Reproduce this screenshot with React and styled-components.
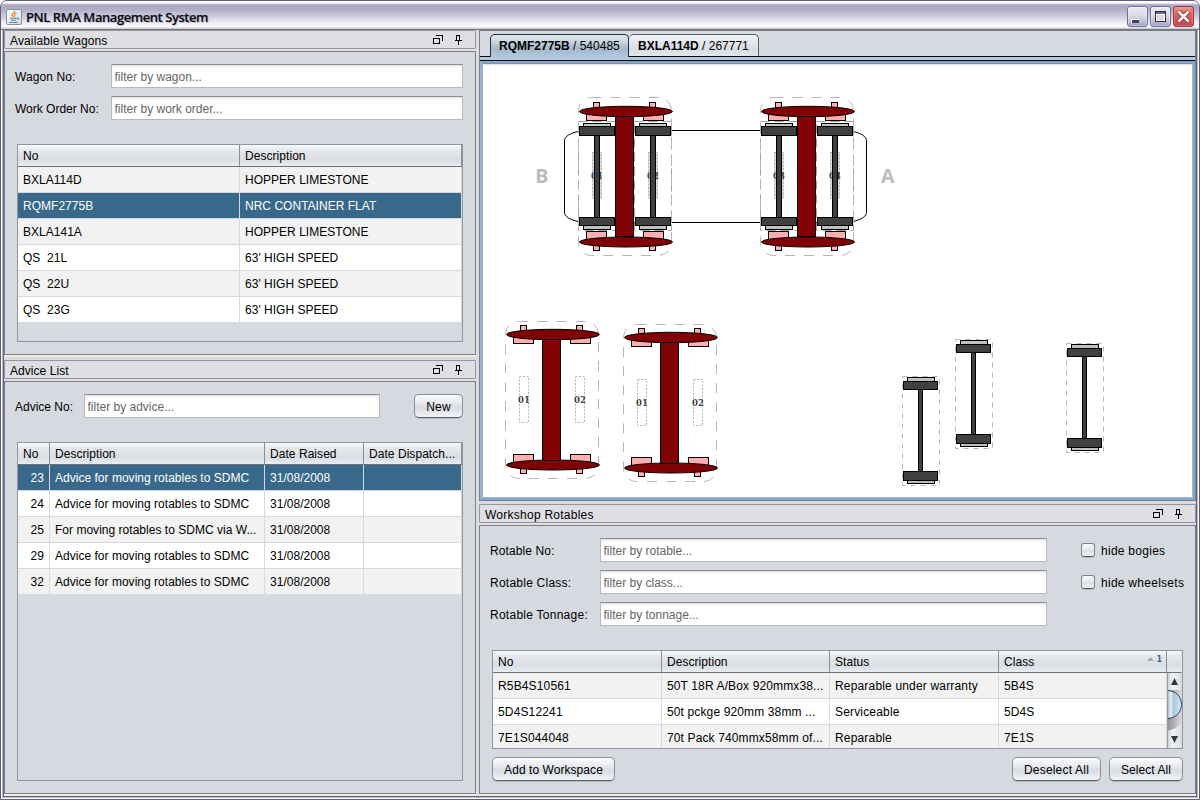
import React from "react";
import styled, { createGlobalStyle } from "styled-components";

const GlobalStyle = createGlobalStyle`
  * { box-sizing: border-box; }
  html, body { margin: 0; padding: 0; background: #fff; }
  body { width: 1200px; height: 800px; overflow: hidden; }
  body, button, input {
    font-family: "Liberation Sans", Arial, sans-serif;
    font-size: 12px;
    color: #000;
  }
`;

/* ---------- window frame ---------- */

const Window = styled.div`
  width: 1200px;
  height: 800px;
  display: flex;
  flex-direction: column;
  border: 1px solid #615d79;
  border-radius: 7px 7px 0 0;
  overflow: hidden;
  background: linear-gradient(#66627e, #66627e) 2px 0 / 1194px 796px no-repeat, #ffffff;
  box-shadow: inset 0 0 0 1px #ffffff, inset 0 0 0 2px #b9b7ce;
`;

const TitleBar = styled.header`
  flex: none;
  height: 29px;
  display: flex;
  align-items: center;
  padding: 2px 5px 0 5px;
  background: linear-gradient(
    #fdfdfe 0,
    #fdfdfe 2px,
    #c9c8d9 3px,
    #a9a8c4 4px,
    #b1b0c9 9px,
    #d0cfde 16px,
    #f4f4f8 23px,
    #ffffff 26px,
    #cfced8 27px,
    #cfced8 28px,
    #757580 28px
  );
`;

const Title = styled.h1`
  margin: 0 auto 0 4px;
  font-family: "Open Sans", "Noto Sans", sans-serif;
  font-size: 13px;
  font-weight: 600;
  line-height: 20px;
  letter-spacing: -0.44px;
  color: #0c0c10;
  -webkit-text-stroke: 0.2px #0c0c10;
  text-shadow: 1px 1px 0 #c4c3d4;
`;

const WindowButton = styled.button`
  width: 21px;
  height: 21px;
  margin-left: 2px;
  padding: 0;
  display: flex;
  align-items: center;
  justify-content: center;
  border: 1px solid ${(p) => (p.$close ? "#a33440" : "#6d7092")};
  border-radius: 3px;
  background: ${(p) =>
    p.$close
      ? "linear-gradient(#e8a294 0, #dc6d6a 5px, #d65a5a 11px, #bd434e 19px)"
      : "linear-gradient(#e9e9f2 0, #dcdce9 8px, #c3c3d8 14px, #9c9cc0 19px)"};
  box-shadow: inset 0 0 0 1px ${(p) => (p.$close ? "rgba(240,150,140,.45)" : "rgba(255,255,255,.35)")};
`;

const Content = styled.main`
  flex: none;
  height: 766px;
  margin: 0 3px;
  display: flex;
  gap: 3px;
  background: #dddce2;
`;

const Column = styled.section`
  width: ${(p) => p.$width}px;
  display: flex;
  flex-direction: column;
  background: #e0dfe4;
`;

/* ---------- docked panels ---------- */

const PanelHeader = styled.div`
  flex: none;
  height: 19px;
  margin-bottom: 2px;
  padding: 1px 12px 0 5px;
  display: flex;
  align-items: center;
  border: 1px solid #96959a;
  border-radius: 1px;
  background: #dfdee3;
  line-height: 16px;
`;

const PanelTitle = styled.span`
  margin-right: auto;
  padding-top: 2px;
  letter-spacing: ${(p) => p.$track || 0}px;
`;

const PanelBody = styled.div`
  flex: none;
  height: ${(p) => p.$height}px;
  padding: 12px 0 0 10px;
  border: 1px solid #7f7f86;
  background: #d6d9df;
`;

const CreamEdge = styled.div`
  flex: none;
  height: 2px;
  background: #f0ede0;
`;

const SplitGap = styled.div`
  flex: none;
  height: 3px;
  background: #d9dae0;
`;

/* ---------- form parts ---------- */

const FormRows = styled.div`
  display: flex;
  flex-direction: column;
  gap: 8px;
`;

const FormRow = styled.label`
  display: flex;
  align-items: center;
  height: 24px;
`;

const FieldLabel = styled.span`
  width: ${(p) => p.$width}px;
  padding-top: 1px;
  line-height: 14px;
  letter-spacing: ${(p) => p.$track || 0}px;
`;

const TextField = styled.input`
  width: ${(p) => p.$width}px;
  height: 24px;
  margin: 0;
  padding: 1px 3px 0 2.5px;
  border: 1px solid #b9b9bc;
  border-top-color: #8d8e90;
  border-radius: 0;
  outline: none;
  background: linear-gradient(#d4d4d6 0, #f1f1f2 1px, #fff 3px);
  &::placeholder {
    color: #666;
    opacity: 1;
  }
`;

const Button = styled.button`
  width: ${(p) => p.$width}px;
  height: 24px;
  padding: 1px 0 0;
  letter-spacing: ${(p) => p.$track || 0}px;
  border: 1px solid #8c9099;
  border-bottom-color: #5b6069;
  border-radius: 5px;
  background: linear-gradient(#fafbfc 0, #e9ebee 35%, #d9dce2 55%, #dfe2e8 70%, #f3f5fa 100%);
  box-shadow: 0 1px 0 #b7bac1;
  white-space: nowrap;
`;

const CheckRow = styled.label`
  display: flex;
  align-items: center;
  height: 24px;
  gap: 6px;
  white-space: nowrap;
  letter-spacing: 0.27px;
`;

const CheckText = styled.span`
  padding-top: 2px;
`;

const CheckBox = styled.span`
  width: 14px;
  height: 14px;
  border: 1px solid #7f838c;
  border-bottom-color: #5d626b;
  border-radius: 3px;
  background: linear-gradient(#f8f9fb, #e4e7ec 50%, #dcdfe5 60%, #f0f2f7);
  box-shadow: 0 1px 0 #b7bac1;
`;

const AdviceBar = styled.div`
  display: flex;
  align-items: center;
  justify-content: space-between;
  width: 448px;
`;

const RotableForm = styled.div`
  display: flex;
  gap: 34px;
`;

const ButtonBar = styled.div`
  display: flex;
  gap: 8px;
  width: 691px;
  margin: 8px 0 0 2px;
`;

const Spacer = styled.div`
  flex: 1;
`;

/* ---------- tables ---------- */

const TableFrame = styled.div`
  width: ${(p) => p.$width}px;
  height: ${(p) => p.$height}px;
  margin: 24px 0 0 2px;
  border: 1px solid #92959e;
  overflow: hidden;
`;

const TableLine = styled.div`
  display: grid;
  grid-template-columns: ${(p) => p.$cols};
`;

const HeadCell = styled.div`
  height: 22px;
  padding-left: 5px;
  display: flex;
  align-items: center;
  overflow: hidden;
  white-space: nowrap;
  letter-spacing: 0.05px;
  border-right: 1px solid #8b8e96;
  border-bottom: 1px solid #6d717a;
  background: linear-gradient(#f8f9fb 0, #e6e9ec 5px, #dde0e4 12px, #dadde3 15px, #e9ecf4 21px);
  ${(p) => p.$plain && "border-right-color: #e2e4e8;"}
`;

const SortMark = styled.span`
  margin: 0 4px 5px auto;
  display: flex;
  align-items: center;
  gap: 2px;
  font: bold 8px/11px "DejaVu Sans", sans-serif;
  color: #39698a;
`;

const Cell = styled.div`
  height: 26px;
  padding: 1px 5px 0;
  line-height: 25px;
  overflow: hidden;
  white-space: nowrap;
  letter-spacing: ${(p) => p.$track || 0.02}px;
  text-align: ${(p) => (p.$right ? "right" : "left")};
  border-right: 1px solid #d6d9df;
  border-bottom: 1px solid #d6d9df;
  background: ${(p) => (p.$selected ? "#39698a" : p.$odd ? "#f2f2f2" : "#fff")};
  color: ${(p) => (p.$selected ? "#fff" : "#000")};
`;

const RotablesBody = styled.div`
  display: flex;
`;

const ScrollBar = styled.div`
  width: 15px;
  height: 75px;
`;

function Table({ width, height, cols, head, rows, selected, rightFirst }) {
  return (
    <TableFrame $width={width} $height={height}>
      <TableLine $cols={cols}>
        {head.map((h) => (
          <HeadCell key={h}>{h}</HeadCell>
        ))}
      </TableLine>
      {rows.map((row, r) => (
        <TableLine $cols={cols} key={r}>
          {row.map((c, i) => (
            <Cell key={i} $odd={r % 2 === 0} $selected={r === selected} $right={rightFirst && i === 0}>
              {c}
            </Cell>
          ))}
        </TableLine>
      ))}
    </TableFrame>
  );
}

/* ---------- workspace ---------- */

const Workspace = styled.div`
  flex: none;
  height: 471px;
  display: flex;
  flex-direction: column;
  border: 1px solid #7f7f86;
  background: #d6d9df;
`;

const TabStrip = styled.div`
  flex: none;
  height: 26px;
  display: flex;
  align-items: flex-end;
  padding-left: 10px;
  border-bottom: 1px solid #05050f;
`;

const Tab = styled.div`
  width: ${(p) => p.$width}px;
  height: ${(p) => (p.$active ? 23 : 22)}px;
  margin-bottom: ${(p) => (p.$active ? -1 : 0)}px;
  padding: ${(p) => (p.$active ? "0 0 0 8px" : "0 0 0 9px")};
  line-height: 22px;
  white-space: nowrap;
  border: 1px solid ${(p) => (p.$active ? "#1f3040" : "#5c5f68")};
  border-left-width: ${(p) => (p.$active ? 1 : 0)}px;
  border-bottom: 0;
  border-radius: 5px 5px 0 0;
  background: ${(p) =>
    p.$active
      ? "linear-gradient(#e2eaf1 0, #c3d1de 8px, #a9bccd 12px, #a7bbce 16px, #b3c9de 22px)"
      : "linear-gradient(#f2f3f6 0, #e2e4e9 9px, #d9dce2 14px, #e4e7ee 22px)"};
`;

const TabBand = styled.div`
  flex: none;
  height: 4px;
  background: #b5c9de;
  border-bottom: 1px solid #05050f;
`;

const CanvasFrame = styled.div`
  flex: 1;
  border: 2px solid #7ba9d2;
  border-left-color: #8db4d8;
`;

const Canvas = styled.div`
  width: 100%;
  height: 100%;
  border: 1px solid #b0b0b4;
  border-top-color: #8d8e90;
  background: linear-gradient(#dededf 0, #fff 2px);
  svg { display: block; }
`;

const PINK = "#ffafaf";
const STEEL = "#404040";
const MAROON = "#800205";

function Slot({ x, y, label, filled }) {
  return (
    <g>
      <rect x={x} y={y} width="9" height="46" fill={filled ? "#dadada" : "none"} stroke={filled ? "#b2b2b2" : "#b8b8b8"} strokeDasharray="2 1.5" />
      <text x={x + 4.5} y={y + 26.5} textAnchor="middle" fontFamily="DejaVu Serif" fontWeight="bold" fontSize="8.5" fill="#404040">
        {label}
      </text>
    </g>
  );
}

function BogieFrame({ x, y, mounted }) {
  return (
    <g transform={`translate(${x} ${y})`} stroke="#000">
      <rect
        x="0.5"
        y={mounted ? -0.5 : 0.5}
        width="93"
        height={mounted ? 158 : 157}
        rx="13"
        ry="13"
        fill="none"
        stroke="#b6b6b6"
        strokeDasharray="10 9"
      />
      <g fill={PINK}>
        <rect x="15.5" y="4.5" width="6" height="10" />
        <rect x="71.5" y="4.5" width="6" height="10" />
        <rect x="8.5" y="12.5" width="20" height="10" />
        <rect x="65.5" y="12.5" width="20" height="10" />
        <rect x="15.5" y="142.5" width="6" height="10" />
        <rect x="71.5" y="142.5" width="6" height="10" />
        <rect x="8.5" y="133.5" width="20" height="9" />
        <rect x="65.5" y="133.5" width="20" height="9" />
      </g>
      <g fill={MAROON}>
        <ellipse cx="48" cy="13.5" rx="46.5" ry="5.2" />
        <ellipse cx="48" cy="144" rx="46.5" ry="5" />
        <rect x="37.5" y="18.5" width="18" height={mounted ? 120 : 121} />
      </g>
    </g>
  );
}

function Wheelset({ x, y }) {
  return (
    <g transform={`translate(${x} ${y})`} stroke="#000">
      <rect x="0.5" y="0.5" width="37" height="109" fill="none" stroke="#b6b6b6" strokeDasharray="5 5" />
      <rect x="5.5" y="1.5" width="27" height="5" fill="#c0c0c0" />
      <rect x="5.5" y="104.5" width="27" height="3" fill="#c0c0c0" />
      <rect x="16.5" y="13.5" width="4" height="82" fill={STEEL} />
      <rect x="1.5" y="5.5" width="34" height="8" fill={STEEL} />
      <rect x="1.5" y="95.5" width="34" height="9" fill={STEEL} />
    </g>
  );
}

function MountedWheelset({ x }) {
  return (
    <g transform={`translate(${x} 121)`} stroke="#000">
      <rect x="0.5" y="0.5" width="37" height="109" fill="none" stroke="#a2a2a2" strokeDasharray="9 5" />
      <rect x="5.5" y="2.5" width="27" height="5" fill="#c0ccc6" />
      <rect x="5.5" y="104.5" width="27" height="4" fill="#c0c0c0" />
      <rect x="16.5" y="14.5" width="5" height="82" fill={STEEL} />
      <rect x="1.5" y="5.5" width="35" height="9" fill={STEEL} />
      <rect x="1.5" y="96.5" width="35" height="8" fill={STEEL} />
    </g>
  );
}

function WagonDiagram() {
  return (
    <svg width="709" height="433" viewBox="483 64 709 433">
      <rect x="564.5" y="130.5" width="302" height="92" rx="24" ry="10" fill="#fff" stroke="#000" />
      <g fontFamily="Open Sans" fontWeight="bold" fontSize="19.5" fill="#bcbcbc">
        <text x="535.3" y="183">B</text>
        <text x="881" y="183">A</text>
      </g>
      <Slot x={592.5} y={152.5} label="01" filled />
      <Slot x={648.5} y={152.5} label="02" filled />
      <Slot x={774.5} y={152.5} label="03" filled />
      <Slot x={830.5} y={152.5} label="04" filled />
      <MountedWheelset x={578} />
      <MountedWheelset x={634} />
      <MountedWheelset x={760} />
      <MountedWheelset x={816} />
      <BogieFrame x={578} y={98} mounted />
      <BogieFrame x={760} y={98} mounted />

      <BogieFrame x={505} y={321} />
      <Slot x={519.5} y={376.5} label="01" />
      <Slot x={575.5} y={376.5} label="02" />
      <BogieFrame x={623} y={324} />
      <Slot x={637.5} y={379.5} label="01" />
      <Slot x={693.5} y={379.5} label="02" />

      <Wheelset x={902} y={376} />
      <Wheelset x={955} y={339} />
      <Wheelset x={1066} y={343} />
    </svg>
  );
}

/* ---------- icons ---------- */

function JavaIcon() {
  return (
    <svg width="16" height="16" viewBox="0 0 16 16">
      <defs>
        <linearGradient id="cup" x1="0" y1="0" x2="1" y2="1">
          <stop offset="0" stopColor="#fff" />
          <stop offset="1" stopColor="#d4dde4" />
        </linearGradient>
      </defs>
      <rect x="0.5" y="0.5" width="15" height="15" rx="1.5" fill="url(#cup)" stroke="#7e95a6" />
      <path
        d="M8.8 1.600C9.300 3.400 5.600 4 6 6C6.200 6.800 6.800 7 7 7.800M10.500 3.800C9 4.400 8 5.200 8.500 6.200C8.800 6.900 8.900 7.200 8.300 7.900"
        fill="none"
        stroke="#ee8a32"
        strokeWidth="1.300"
      />
      <path d="M4 9.200H11M5 11.200H10.200M3 13.500H11.700M11.300 9C13.600 8.400 13.400 10.600 11.500 11" fill="none" stroke="#5b7f98" />
    </svg>
  );
}

function PanelIcons() {
  return (
    <svg width="30" height="12" viewBox="0 0 30 12" fill="none" stroke="#000" shapeRendering="crispEdges">
      <rect x="0.5" y="4.500" width="6" height="5" />
      <path d="M3 1.500H9.500V7" />
      <path d="M23.500 6.500V1.500H26.500V6.500M21.500 6.500H28.500M25 7V10.500" />
    </svg>
  );
}

function ScrollArt() {
  return (
    <svg width="15" height="75" viewBox="0 0 15 75">
      <defs>
        <linearGradient id="track" x1="0" x2="1" y1="0" y2="0">
          <stop offset="0" stopColor="#c7cacf" />
          <stop offset="0.350" stopColor="#f2f3f5" />
          <stop offset="1" stopColor="#d8dbe0" />
        </linearGradient>
        <linearGradient id="well" x1="0" x2="1" y1="0" y2="0">
          <stop offset="0" stopColor="#8b8d91" />
          <stop offset="1" stopColor="#dadce0" />
        </linearGradient>
        <linearGradient id="thumb" x1="0" x2="1" y1="0" y2="0">
          <stop offset="0" stopColor="#8fa9bf" />
          <stop offset="0.250" stopColor="#e6eef5" />
          <stop offset="0.450" stopColor="#adc6da" />
          <stop offset="1" stopColor="#d7e8f6" />
        </linearGradient>
      </defs>
      <rect width="15" height="75" fill="url(#track)" />
      <path d="M0 17H15V47C13 54 6 57 0 57.500Z" fill="url(#well)" />
      <path d="M0 17.500C9 17.500 14.500 24 14.500 31.500S9 45.500 0 45.500Z" fill="url(#thumb)" />
      <path d="M0 17.500C9 17.500 14.500 24 14.500 31.500S9 45.500 0 45.500" fill="none" stroke="#2c4a63" />
      <path d="M0.500 0V75" stroke="#999ca3" />
      <path d="M4 12L7.500 5L11 12Z" fill="#33363b" />
      <path d="M4 63L7.500 70L11 63Z" fill="#33363b" />
    </svg>
  );
}

const DockHeader = ({ title, track }) => (
  <PanelHeader>
    <PanelTitle $track={track}>{title}</PanelTitle>
    <PanelIcons />
  </PanelHeader>
);

const FilterRow = ({ label, labelWidth, hint, width, track }) => (
  <FormRow>
    <FieldLabel $width={labelWidth} $track={track}>
      {label}
    </FieldLabel>
    <TextField $width={width} placeholder={hint} />
  </FormRow>
);

const wagons = [
  ["BXLA114D", "HOPPER LIMESTONE"],
  ["RQMF2775B", "NRC CONTAINER FLAT"],
  ["BXLA141A", "HOPPER LIMESTONE"],
  ["QS\u00a0 21L", "63' HIGH SPEED"],
  ["QS\u00a0 22U", "63' HIGH SPEED"],
  ["QS\u00a0 23G", "63' HIGH SPEED"],
];

const advices = [
  ["23", "Advice for moving rotables to SDMC", "31/08/2008", ""],
  ["24", "Advice for moving rotables to SDMC", "31/08/2008", ""],
  ["25", "For moving rotables to SDMC via W...", "31/08/2008", ""],
  ["29", "Advice for moving rotables to SDMC", "31/08/2008", ""],
  ["32", "Advice for moving rotables to SDMC", "31/08/2008", ""],
];

const rotables = [
  ["R5B4S10561", "50T 18R A/Box 920mmx38...", "Reparable under warranty", "5B4S"],
  ["5D4S12241", "50t pckge 920mm 38mm ...", "Serviceable", "5D4S"],
  ["7E1S044048", "70t Pack 740mmx58mm of...", "Reparable", "7E1S"],
];

const ROTABLE_COLS = "169px 168px 169px 168px";
const ROTABLE_TRACKS = [0.15, 0.13, 0.17, 0.1];

export default function App() {
  return (
    <>
      <GlobalStyle />
      <Window>
        <TitleBar>
          <JavaIcon />
          <Title>PNL RMA Management System</Title>
          <WindowButton>
            <svg width="19" height="19" shapeRendering="crispEdges">
              <rect x="3" y="12" width="8" height="4" fill="#fff" />
              <rect x="4" y="13" width="7" height="3" fill="#44415f" />
            </svg>
          </WindowButton>
          <WindowButton>
            <svg width="19" height="19" shapeRendering="crispEdges">
              <rect x="4.500" y="4.500" width="10" height="10" fill="#d6d6e6" stroke="#2c2b3d" />
              <rect x="5" y="5" width="9" height="2" fill="#6d6b8c" />
              <rect x="5.500" y="7.500" width="8" height="6" fill="none" stroke="#fff" />
            </svg>
          </WindowButton>
          <WindowButton $close>
            <svg width="19" height="19">
              <path d="M4.500 4.500L14.500 14.500M14.500 4.500L4.500 14.500" stroke="#7d1f2b" strokeWidth="4" />
              <path d="M4.500 4.500L14.500 14.500M14.500 4.500L4.500 14.500" stroke="#fff" strokeWidth="2.600" />
            </svg>
          </WindowButton>
        </TitleBar>

        <Content>
          <Column $width={472}>
            <DockHeader title="Available Wagons" track={0.13} />
            <PanelBody $height={304}>
              <FormRows>
                <FilterRow label="Wagon No:" labelWidth={96} hint="filter by wagon..." width={352} track={0.1} />
                <FilterRow label="Work Order No:" labelWidth={96} hint="filter by work order..." width={352} />
              </FormRows>
              <Table
                width={446}
                height={198}
                cols="222px 222px"
                head={["No", "Description"]}
                rows={wagons}
                selected={1}
              />
            </PanelBody>
            <CreamEdge />
            <SplitGap />
            <DockHeader title="Advice List" track={0.05} />
            <PanelBody $height={413}>
              <AdviceBar>
                <FilterRow label="Advice No:" labelWidth={69} hint="filter by advice..." width={296} />
                <Button $width={49} $track={0.2}>New</Button>
              </AdviceBar>
              <Table
                width={446}
                height={339}
                cols="32px 215px 99px 98px"
                head={["No", "Description", "Date Raised", "Date Dispatch..."]}
                rows={advices}
                selected={0}
                rightFirst
              />
            </PanelBody>
            <CreamEdge />
          </Column>

          <Column $width={717}>
            <Workspace>
              <TabStrip>
                <Tab $width={139} $active>
                  <b>RQMF2775B</b> / 540485
                </Tab>
                <Tab $width={130}>
                  <b>BXLA114D</b> / 267771
                </Tab>
              </TabStrip>
              <TabBand />
              <CanvasFrame>
                <Canvas>
                  <WagonDiagram />
                </Canvas>
              </CanvasFrame>
            </Workspace>
            <SplitGap />
            <DockHeader title="Workshop Rotables" track={0.25} />
            <PanelBody $height={269}>
              <RotableForm>
                <FormRows>
                  <FilterRow label="Rotable No:" labelWidth={110} hint="filter by rotable..." width={447} track={0.1} />
                  <FilterRow label="Rotable Class:" labelWidth={110} hint="filter by class..." width={447} track={0.24} />
                  <FilterRow label="Rotable Tonnage:" labelWidth={110} hint="filter by tonnage..." width={447} track={0.26} />
                </FormRows>
                <FormRows>
                  <CheckRow>
                    <CheckBox />
                    <CheckText>hide bogies</CheckText>
                  </CheckRow>
                  <CheckRow>
                    <CheckBox />
                    <CheckText>hide wheelsets</CheckText>
                  </CheckRow>
                </FormRows>
              </RotableForm>
              <TableFrame $width={691} $height={99}>
                <TableLine $cols={ROTABLE_COLS + " 15px"}>
                  <HeadCell>No</HeadCell>
                  <HeadCell>Description</HeadCell>
                  <HeadCell>Status</HeadCell>
                  <HeadCell>
                    Class
                    <SortMark>
                      <svg width="7" height="4">
                        <path d="M0 4L3.500 0L7 4Z" fill="#a3a9b6" />
                      </svg>
                      1
                    </SortMark>
                  </HeadCell>
                  <HeadCell $plain />
                </TableLine>
                <RotablesBody>
                  <div>
                    {rotables.map((row, r) => (
                      <TableLine $cols={ROTABLE_COLS} key={r}>
                        {row.map((c, i) => (
                          <Cell key={i} $odd={r % 2 === 0} $track={ROTABLE_TRACKS[i]}>
                            {c}
                          </Cell>
                        ))}
                      </TableLine>
                    ))}
                  </div>
                  <ScrollBar>
                    <ScrollArt />
                  </ScrollBar>
                </RotablesBody>
              </TableFrame>
              <ButtonBar>
                <Button $width={123} $track={0.06}>Add to Workspace</Button>
                <Spacer />
                <Button $width={89} $track={0.2}>Deselect All</Button>
                <Button $width={74} $track={0.05}>Select All</Button>
              </ButtonBar>
            </PanelBody>
            <CreamEdge />
          </Column>
        </Content>
      </Window>
    </>
  );
}
